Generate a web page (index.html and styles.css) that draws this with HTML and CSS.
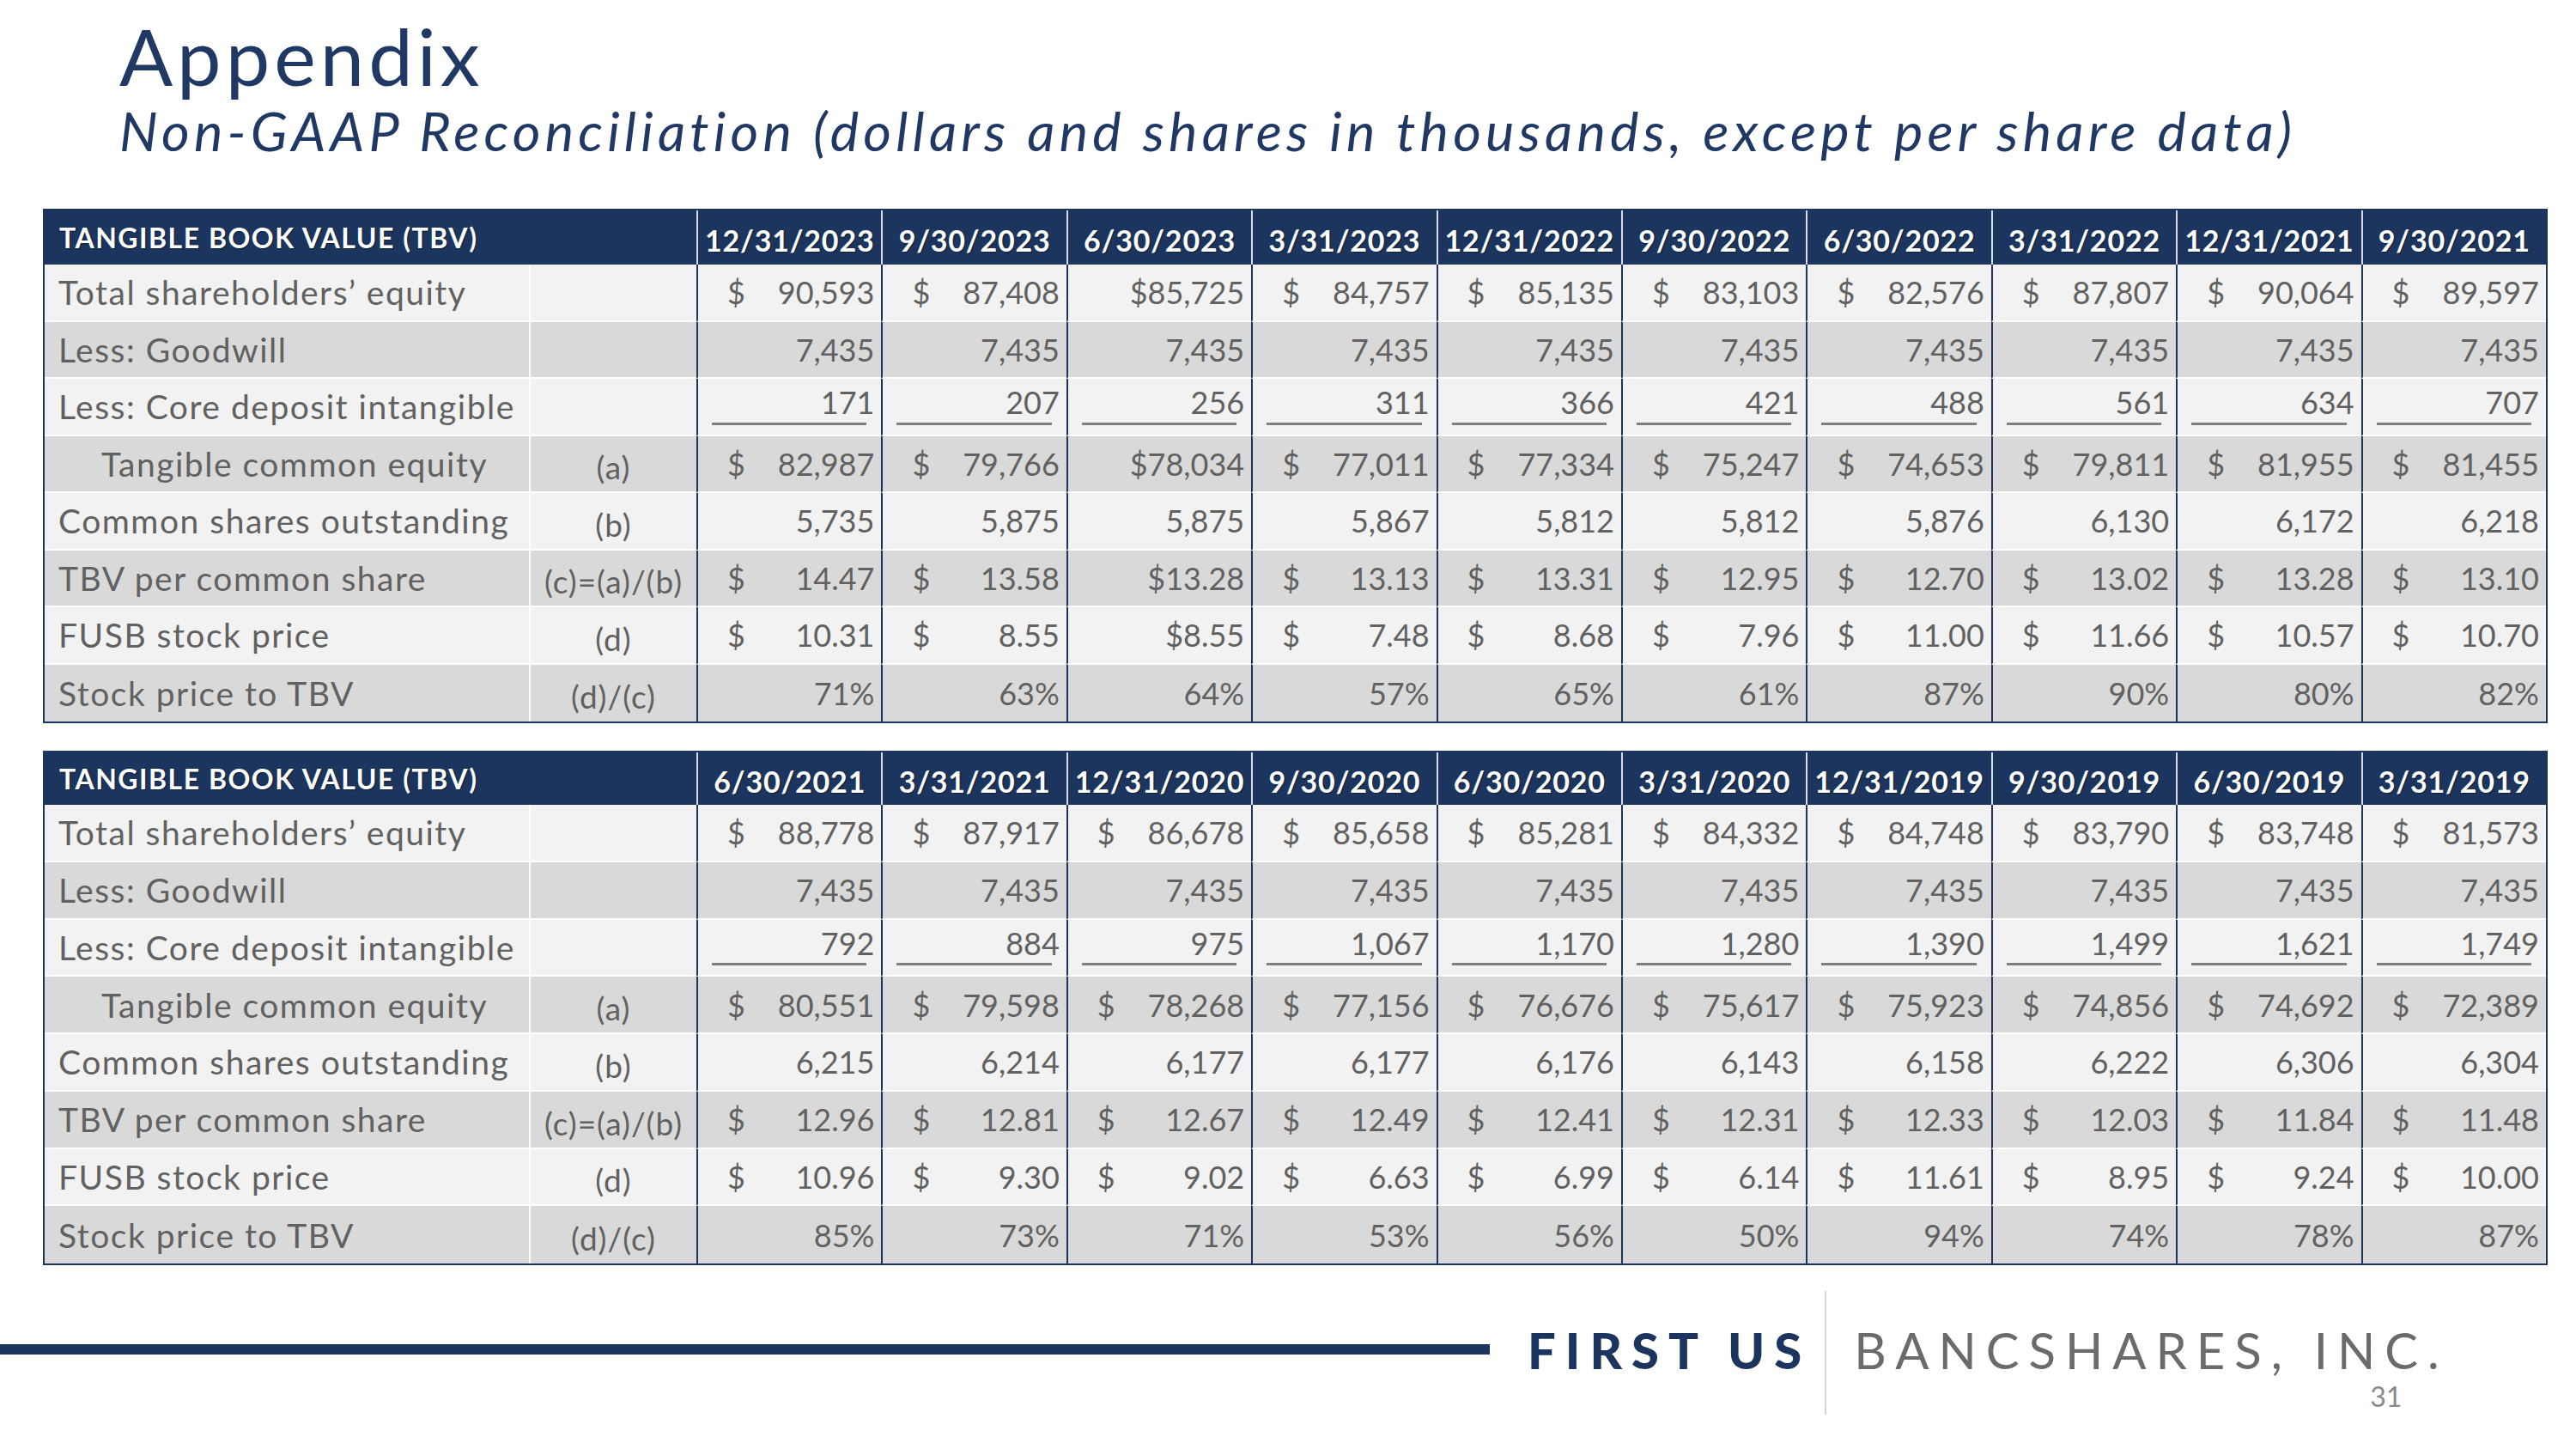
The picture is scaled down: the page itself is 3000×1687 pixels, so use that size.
FILE: index.html
```html
<!DOCTYPE html>
<html lang="en">
<head>
<meta charset="utf-8">
<title>Appendix - Non-GAAP Reconciliation</title>
<link rel="stylesheet" href="styles.css">
</head>
<body>
<div class="slide">
  <h1 class="title">Appendix</h1>
  <h2 class="subtitle">Non-GAAP Reconciliation (dollars and shares in thousands, except per share data)</h2>

  <div class="tables">
    <div class="tbl t1">
      <div class="row head">
        <div class="hl">TANGIBLE BOOK VALUE (TBV)</div>
        <div class="hd">12/31/2023</div><div class="hd">9/30/2023</div><div class="hd">6/30/2023</div><div class="hd">3/31/2023</div><div class="hd">12/31/2022</div><div class="hd">9/30/2022</div><div class="hd">6/30/2022</div><div class="hd">3/31/2022</div><div class="hd">12/31/2021</div><div class="hd">9/30/2021</div>
      </div>
      <div class="row lt">
        <div class="lab">Total shareholders’ equity</div><div class="note"></div>
        <div class="c"><span>$</span><span class="v">90,593</span></div>
        <div class="c"><span>$</span><span class="v">87,408</span></div>
        <div class="c"><span class="v">$85,725</span></div>
        <div class="c"><span>$</span><span class="v">84,757</span></div>
        <div class="c"><span>$</span><span class="v">85,135</span></div>
        <div class="c"><span>$</span><span class="v">83,103</span></div>
        <div class="c"><span>$</span><span class="v">82,576</span></div>
        <div class="c"><span>$</span><span class="v">87,807</span></div>
        <div class="c"><span>$</span><span class="v">90,064</span></div>
        <div class="c"><span>$</span><span class="v">89,597</span></div>
      </div>
      <div class="row dk">
        <div class="lab">Less: Goodwill</div><div class="note"></div>
        <div class="c"><span class="v">7,435</span></div><div class="c"><span class="v">7,435</span></div><div class="c"><span class="v">7,435</span></div><div class="c"><span class="v">7,435</span></div><div class="c"><span class="v">7,435</span></div><div class="c"><span class="v">7,435</span></div><div class="c"><span class="v">7,435</span></div><div class="c"><span class="v">7,435</span></div><div class="c"><span class="v">7,435</span></div><div class="c"><span class="v">7,435</span></div>
      </div>
      <div class="row lt">
        <div class="lab">Less: Core deposit intangible</div><div class="note"></div>
        <div class="c u"><span class="v">171</span></div><div class="c u"><span class="v">207</span></div><div class="c u"><span class="v">256</span></div><div class="c u"><span class="v">311</span></div><div class="c u"><span class="v">366</span></div><div class="c u"><span class="v">421</span></div><div class="c u"><span class="v">488</span></div><div class="c u"><span class="v">561</span></div><div class="c u"><span class="v">634</span></div><div class="c u"><span class="v">707</span></div>
      </div>
      <div class="row dk">
        <div class="lab indent">Tangible common equity</div><div class="note">(a)</div>
        <div class="c"><span>$</span><span class="v">82,987</span></div>
        <div class="c"><span>$</span><span class="v">79,766</span></div>
        <div class="c"><span class="v">$78,034</span></div>
        <div class="c"><span>$</span><span class="v">77,011</span></div>
        <div class="c"><span>$</span><span class="v">77,334</span></div>
        <div class="c"><span>$</span><span class="v">75,247</span></div>
        <div class="c"><span>$</span><span class="v">74,653</span></div>
        <div class="c"><span>$</span><span class="v">79,811</span></div>
        <div class="c"><span>$</span><span class="v">81,955</span></div>
        <div class="c"><span>$</span><span class="v">81,455</span></div>
      </div>
      <div class="row lt">
        <div class="lab">Common shares outstanding</div><div class="note">(b)</div>
        <div class="c"><span class="v">5,735</span></div><div class="c"><span class="v">5,875</span></div><div class="c"><span class="v">5,875</span></div><div class="c"><span class="v">5,867</span></div><div class="c"><span class="v">5,812</span></div><div class="c"><span class="v">5,812</span></div><div class="c"><span class="v">5,876</span></div><div class="c"><span class="v">6,130</span></div><div class="c"><span class="v">6,172</span></div><div class="c"><span class="v">6,218</span></div>
      </div>
      <div class="row dk">
        <div class="lab">TBV per common share</div><div class="note">(c)=(a)/(b)</div>
        <div class="c"><span>$</span><span class="v">14.47</span></div>
        <div class="c"><span>$</span><span class="v">13.58</span></div>
        <div class="c"><span class="v">$13.28</span></div>
        <div class="c"><span>$</span><span class="v">13.13</span></div>
        <div class="c"><span>$</span><span class="v">13.31</span></div>
        <div class="c"><span>$</span><span class="v">12.95</span></div>
        <div class="c"><span>$</span><span class="v">12.70</span></div>
        <div class="c"><span>$</span><span class="v">13.02</span></div>
        <div class="c"><span>$</span><span class="v">13.28</span></div>
        <div class="c"><span>$</span><span class="v">13.10</span></div>
      </div>
      <div class="row lt">
        <div class="lab">FUSB stock price</div><div class="note">(d)</div>
        <div class="c"><span>$</span><span class="v">10.31</span></div>
        <div class="c"><span>$</span><span class="v">8.55</span></div>
        <div class="c"><span class="v">$8.55</span></div>
        <div class="c"><span>$</span><span class="v">7.48</span></div>
        <div class="c"><span>$</span><span class="v">8.68</span></div>
        <div class="c"><span>$</span><span class="v">7.96</span></div>
        <div class="c"><span>$</span><span class="v">11.00</span></div>
        <div class="c"><span>$</span><span class="v">11.66</span></div>
        <div class="c"><span>$</span><span class="v">10.57</span></div>
        <div class="c"><span>$</span><span class="v">10.70</span></div>
      </div>
      <div class="row dk">
        <div class="lab">Stock price to TBV</div><div class="note">(d)/(c)</div>
        <div class="c"><span class="v">71%</span></div><div class="c"><span class="v">63%</span></div><div class="c"><span class="v">64%</span></div><div class="c"><span class="v">57%</span></div><div class="c"><span class="v">65%</span></div><div class="c"><span class="v">61%</span></div><div class="c"><span class="v">87%</span></div><div class="c"><span class="v">90%</span></div><div class="c"><span class="v">80%</span></div><div class="c"><span class="v">82%</span></div>
      </div>
    </div>

    <div class="tbl t2">
      <div class="row head">
        <div class="hl">TANGIBLE BOOK VALUE (TBV)</div>
        <div class="hd">6/30/2021</div><div class="hd">3/31/2021</div><div class="hd">12/31/2020</div><div class="hd">9/30/2020</div><div class="hd">6/30/2020</div><div class="hd">3/31/2020</div><div class="hd">12/31/2019</div><div class="hd">9/30/2019</div><div class="hd">6/30/2019</div><div class="hd">3/31/2019</div>
      </div>
      <div class="row lt">
        <div class="lab">Total shareholders’ equity</div><div class="note"></div>
        <div class="c"><span>$</span><span class="v">88,778</span></div>
        <div class="c"><span>$</span><span class="v">87,917</span></div>
        <div class="c"><span>$</span><span class="v">86,678</span></div>
        <div class="c"><span>$</span><span class="v">85,658</span></div>
        <div class="c"><span>$</span><span class="v">85,281</span></div>
        <div class="c"><span>$</span><span class="v">84,332</span></div>
        <div class="c"><span>$</span><span class="v">84,748</span></div>
        <div class="c"><span>$</span><span class="v">83,790</span></div>
        <div class="c"><span>$</span><span class="v">83,748</span></div>
        <div class="c"><span>$</span><span class="v">81,573</span></div>
      </div>
      <div class="row dk">
        <div class="lab">Less: Goodwill</div><div class="note"></div>
        <div class="c"><span class="v">7,435</span></div><div class="c"><span class="v">7,435</span></div><div class="c"><span class="v">7,435</span></div><div class="c"><span class="v">7,435</span></div><div class="c"><span class="v">7,435</span></div><div class="c"><span class="v">7,435</span></div><div class="c"><span class="v">7,435</span></div><div class="c"><span class="v">7,435</span></div><div class="c"><span class="v">7,435</span></div><div class="c"><span class="v">7,435</span></div>
      </div>
      <div class="row lt">
        <div class="lab">Less: Core deposit intangible</div><div class="note"></div>
        <div class="c u"><span class="v">792</span></div><div class="c u"><span class="v">884</span></div><div class="c u"><span class="v">975</span></div><div class="c u"><span class="v">1,067</span></div><div class="c u"><span class="v">1,170</span></div><div class="c u"><span class="v">1,280</span></div><div class="c u"><span class="v">1,390</span></div><div class="c u"><span class="v">1,499</span></div><div class="c u"><span class="v">1,621</span></div><div class="c u"><span class="v">1,749</span></div>
      </div>
      <div class="row dk">
        <div class="lab indent">Tangible common equity</div><div class="note">(a)</div>
        <div class="c"><span>$</span><span class="v">80,551</span></div>
        <div class="c"><span>$</span><span class="v">79,598</span></div>
        <div class="c"><span>$</span><span class="v">78,268</span></div>
        <div class="c"><span>$</span><span class="v">77,156</span></div>
        <div class="c"><span>$</span><span class="v">76,676</span></div>
        <div class="c"><span>$</span><span class="v">75,617</span></div>
        <div class="c"><span>$</span><span class="v">75,923</span></div>
        <div class="c"><span>$</span><span class="v">74,856</span></div>
        <div class="c"><span>$</span><span class="v">74,692</span></div>
        <div class="c"><span>$</span><span class="v">72,389</span></div>
      </div>
      <div class="row lt">
        <div class="lab">Common shares outstanding</div><div class="note">(b)</div>
        <div class="c"><span class="v">6,215</span></div><div class="c"><span class="v">6,214</span></div><div class="c"><span class="v">6,177</span></div><div class="c"><span class="v">6,177</span></div><div class="c"><span class="v">6,176</span></div><div class="c"><span class="v">6,143</span></div><div class="c"><span class="v">6,158</span></div><div class="c"><span class="v">6,222</span></div><div class="c"><span class="v">6,306</span></div><div class="c"><span class="v">6,304</span></div>
      </div>
      <div class="row dk">
        <div class="lab">TBV per common share</div><div class="note">(c)=(a)/(b)</div>
        <div class="c"><span>$</span><span class="v">12.96</span></div>
        <div class="c"><span>$</span><span class="v">12.81</span></div>
        <div class="c"><span>$</span><span class="v">12.67</span></div>
        <div class="c"><span>$</span><span class="v">12.49</span></div>
        <div class="c"><span>$</span><span class="v">12.41</span></div>
        <div class="c"><span>$</span><span class="v">12.31</span></div>
        <div class="c"><span>$</span><span class="v">12.33</span></div>
        <div class="c"><span>$</span><span class="v">12.03</span></div>
        <div class="c"><span>$</span><span class="v">11.84</span></div>
        <div class="c"><span>$</span><span class="v">11.48</span></div>
      </div>
      <div class="row lt">
        <div class="lab">FUSB stock price</div><div class="note">(d)</div>
        <div class="c"><span>$</span><span class="v">10.96</span></div>
        <div class="c"><span>$</span><span class="v">9.30</span></div>
        <div class="c"><span>$</span><span class="v">9.02</span></div>
        <div class="c"><span>$</span><span class="v">6.63</span></div>
        <div class="c"><span>$</span><span class="v">6.99</span></div>
        <div class="c"><span>$</span><span class="v">6.14</span></div>
        <div class="c"><span>$</span><span class="v">11.61</span></div>
        <div class="c"><span>$</span><span class="v">8.95</span></div>
        <div class="c"><span>$</span><span class="v">9.24</span></div>
        <div class="c"><span>$</span><span class="v">10.00</span></div>
      </div>
      <div class="row dk">
        <div class="lab">Stock price to TBV</div><div class="note">(d)/(c)</div>
        <div class="c"><span class="v">85%</span></div><div class="c"><span class="v">73%</span></div><div class="c"><span class="v">71%</span></div><div class="c"><span class="v">53%</span></div><div class="c"><span class="v">56%</span></div><div class="c"><span class="v">50%</span></div><div class="c"><span class="v">94%</span></div><div class="c"><span class="v">74%</span></div><div class="c"><span class="v">78%</span></div><div class="c"><span class="v">87%</span></div>
      </div>
    </div>
  </div>

  <footer class="footer">
    <div class="rule"></div>
    <div class="brand-first">FIRST US</div>
    <div class="brand-sep"></div>
    <div class="brand-right">
      <div class="brand-banc">BANCSHARES, INC.</div>
      <div class="page-num">31</div>
    </div>
  </footer>
</div>
</body>
</html>
```

FILE: styles.css
```css
* {
  box-sizing: border-box;
  margin: 0;
  padding: 0;
}

body {
  width: 3000px;
  height: 1687px;
  background: #ffffff;
  font-family: Lato, "Open Sans", "Liberation Sans", sans-serif;
  overflow: hidden;
}

.slide {
  padding-top: 20px;
}

.title {
  margin-left: 139px;
  font-size: 92px;
  line-height: 90px;
  font-weight: 400;
  letter-spacing: 5px;
  color: #1f3864;
}

.subtitle {
  margin: 12px 0 0 139px;
  font-size: 63px;
  line-height: 60px;
  font-weight: 400;
  font-style: italic;
  letter-spacing: 5.2px;
  color: #1f3864;
  white-space: nowrap;
}

.tables {
  margin: 61px 0 0 50px;
  display: flex;
  flex-direction: column;
  gap: 32px;
}

.tbl {
  width: 2917px;
  display: grid;
  grid-template-columns: 564px 195px repeat(10, 1fr);
  border: 2px solid #1c355e;
}

.t1 {
  grid-template-rows: 63px repeat(8, 66.5px);
}

.t2 {
  grid-template-rows: 61px repeat(8, 66.75px);
}

.row {
  display: contents;
}

/* header */
.head > div {
  background: #1c355e;
  color: #ffffff;
  font-weight: 700;
  display: flex;
  align-items: center;
  text-shadow: 1px 1px 1px rgba(0, 0, 0, 0.45);
}

.hl {
  grid-column: span 2;
  padding-left: 17px;
  font-size: 32px;
  letter-spacing: 1.5px;
  white-space: nowrap;
}

.hd {
  justify-content: center;
  font-size: 34px;
  letter-spacing: 0.8px;
  border-left: 2px solid #d6dbe4;
  padding-top: 6px;
}

/* body rows */
.lt > div {
  background: #f2f2f2;
}

.dk > div {
  background: #d9d9d9;
}

.lt > div,
.dk > div {
  border-bottom: 2px solid #ffffff;
  color: #616161;
}

.row:last-child > div {
  border-bottom: 0;
}

.lab {
  display: flex;
  align-items: center;
  padding-left: 16px;
  font-size: 39px;
  letter-spacing: 1.5px;
  white-space: nowrap;
}

.lab.indent {
  padding-left: 66px;
}

.note {
  display: flex;
  align-items: center;
  justify-content: center;
  padding-top: 8px;
  border-left: 2px solid #ffffff;
  font-size: 37px;
  letter-spacing: 1px;
  white-space: nowrap;
}

.c {
  position: relative;
  display: flex;
  align-items: center;
  padding: 0 8px 0 34px;
  border-left: 2px solid #1c355e;
  font-size: 36px;
  white-space: nowrap;
}

.c .v {
  margin-left: auto;
}

.c.u::after {
  content: "";
  position: absolute;
  left: 16px;
  right: 17px;
  bottom: 11px;
  height: 3px;
  background: #7f7f7f;
}

.c.u .v {
  margin-top: -10px;
}

/* footer */
.footer {
  margin-top: 30px;
  display: flex;
  align-items: flex-start;
}

.rule {
  margin-top: 62px;
  width: 1735px;
  height: 12px;
  background: #1c355e;
}

.brand-first {
  margin: 40px 0 0 44px;
  font-size: 58px;
  line-height: 58px;
  font-weight: 900;
  letter-spacing: 11px;
  color: #1c355e;
}

.brand-sep {
  margin-left: 16px;
  width: 2px;
  height: 144px;
  background: #d4d4d4;
}

.brand-right {
  margin-left: 32px;
  display: flex;
  flex-direction: column;
}

.brand-banc {
  margin-top: 40px;
  font-size: 58px;
  line-height: 58px;
  font-weight: 400;
  letter-spacing: 11px;
  color: #6b6b6b;
}

.page-num {
  margin: 9px 0 0 601px;
  font-size: 32px;
  line-height: 32px;
  color: #8a8a8a;
}
```
